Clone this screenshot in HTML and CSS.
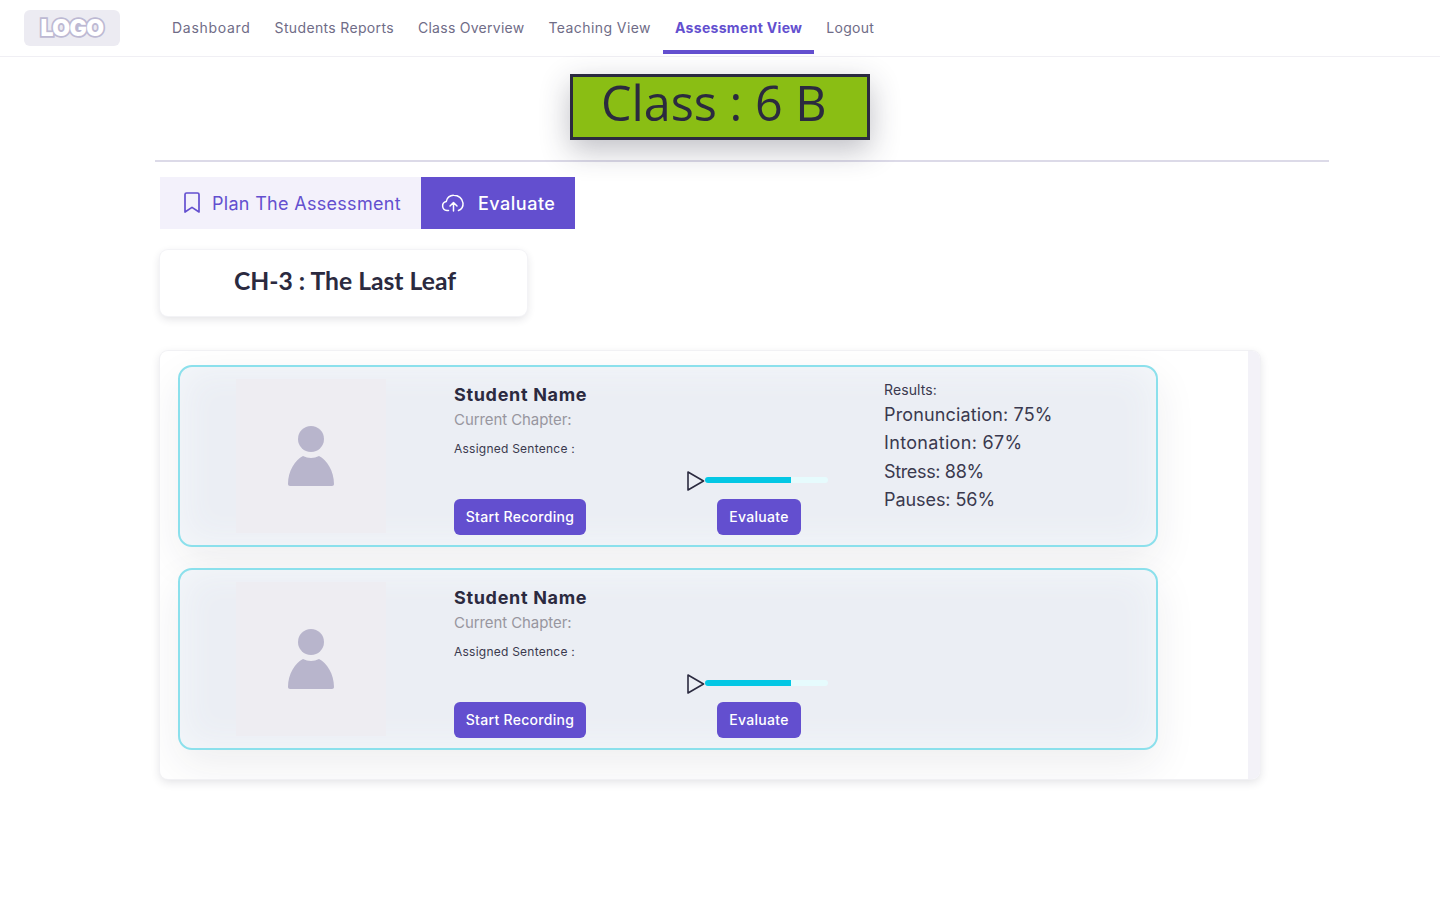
FILE: index.html
```html
<!DOCTYPE html>
<html lang="en">
<head>
<meta charset="UTF-8">
<meta name="viewport" content="width=device-width, initial-scale=1.0">
<title>Assessment View</title>
<link rel="stylesheet" href="styles.css">
</head>
<body>

<header class="navbar">
  <div class="logo"><span>LOGO</span></div>
  <nav class="nav-links">
    <a href="#">Dashboard</a>
    <a href="#">Students Reports</a>
    <a href="#">Class Overview</a>
    <a href="#">Teaching View</a>
    <a href="#" class="active">Assessment View</a>
    <a href="#">Logout</a>
  </nav>
</header>

<div class="class-row">
  <div class="class-box">Class : 6 B</div>
</div>
<hr class="divider">

<div class="tabs">
  <a href="#" class="tab">
    <svg width="18" height="22" viewBox="0 0 18 22" fill="none" stroke="currentColor" stroke-width="1.7" stroke-linejoin="round"><path d="M2 2.500C2 1.700 2.700 1 3.500 1h11c.8 0 1.500.7 1.500 1.500V20l-7-4.600L2 20z"/></svg>
    Plan The Assessment
  </a>
  <a href="#" class="tab tab-active">
    <svg width="24" height="18" viewBox="0 0 24 18" fill="none" stroke="currentColor" stroke-width="1.5" stroke-linecap="round" stroke-linejoin="round"><path d="M7.500 16.500H6A4.600 4.600 0 0 1 5.300 7.400 7.200 7.200 0 0 1 12.700 1.200c4.700 0 8.800 3.400 9.300 7.800.3 3.500-1.300 6.300-4.500 7.500"/><path d="M12.500 17V9M9 12l3.500-3.500L16 12"/></svg>
    Evaluate
  </a>
</div>

<div class="chapter-card">CH-3 : The Last Leaf</div>

<section class="panel">
  <div class="panel-list">

    <article class="student-card">
      <div class="photo">
        <svg width="46" height="60" viewBox="0 0 46 60" fill="#b8b5cc"><circle cx="23" cy="13" r="13"/><path d="M0 58C0 45 7 34 15 30c5 2.500 11 2.500 16 0 8 4 15 15 15 28 0 1.200-.8 2-2 2H2c-1.200 0-2-.8-2-2z"/></svg>
      </div>
      <div class="info">
        <h3 class="student-name">Student Name</h3>
        <p class="chapter-label">Current Chapter:</p>
        <p class="sentence-label">Assigned Sentence :</p>
        <div class="player">
          <svg width="18" height="20" viewBox="0 0 18 20" fill="none" stroke="#2b2a3f" stroke-width="1.600" stroke-linejoin="round"><path d="M1 1l15.500 9L1 19z"/></svg>
          <div class="track"><div class="track-fill"></div></div>
        </div>
        <div class="actions">
          <a href="#" class="btn">Start Recording</a>
          <a href="#" class="btn btn-evaluate">Evaluate</a>
        </div>
      </div>
      <div class="results">
        <p class="results-title">Results:</p>
        <p>Pronunciation: 75%</p>
        <p>Intonation: 67%</p>
        <p>Stress: 88%</p>
        <p>Pauses: 56%</p>
      </div>
    </article>

    <article class="student-card">
      <div class="photo">
        <svg width="46" height="60" viewBox="0 0 46 60" fill="#b8b5cc"><circle cx="23" cy="13" r="13"/><path d="M0 58C0 45 7 34 15 30c5 2.500 11 2.500 16 0 8 4 15 15 15 28 0 1.200-.8 2-2 2H2c-1.200 0-2-.8-2-2z"/></svg>
      </div>
      <div class="info">
        <h3 class="student-name">Student Name</h3>
        <p class="chapter-label">Current Chapter:</p>
        <p class="sentence-label">Assigned Sentence :</p>
        <div class="player">
          <svg width="18" height="20" viewBox="0 0 18 20" fill="none" stroke="#2b2a3f" stroke-width="1.600" stroke-linejoin="round"><path d="M1 1l15.500 9L1 19z"/></svg>
          <div class="track"><div class="track-fill"></div></div>
        </div>
        <div class="actions">
          <a href="#" class="btn">Start Recording</a>
          <a href="#" class="btn btn-evaluate">Evaluate</a>
        </div>
      </div>
    </article>

  </div>
  <div class="panel-scroll"></div>
</section>

</body>
</html>
```

FILE: styles.css
```css
* {
  box-sizing: border-box;
}

body {
  margin: 0;
  height: 900px;
  overflow: hidden;
  background-color: #fff;
  color: #2b2a3f;
  font-family: Inter, "Open Sans", sans-serif;
}

p, h3 {
  margin: 0;
}

a {
  text-decoration: none;
}

.navbar {
  display: flex;
  align-items: stretch;
  height: 57px;
  padding-left: 24px;
  border-bottom: 1px solid #f0eff4;
}

.logo {
  display: flex;
  align-items: center;
  justify-content: center;
  width: 96px;
  height: 36px;
  margin-top: 10px;
  background-color: #ecebf2;
  border-radius: 6px;
}

.logo span {
  color: #fff;
  font-size: 23px;
  font-weight: 900;
  letter-spacing: -0.6px;
  -webkit-text-stroke: 3.5px #bdb9d3;
  paint-order: stroke fill;
}

.nav-links {
  display: flex;
  margin-left: 40px;
  height: 54px;
}

.nav-links a {
  display: flex;
  align-items: center;
  padding: 5px 12px 0;
  border-bottom: 4px solid transparent;
  color: #6f6c87;
  font-size: 14px;
  letter-spacing: 0.27px;
  white-space: nowrap;
}

/* Inter runs narrower than the nav font on some words */
.nav-links a:nth-child(1) {
  letter-spacing: 0.71px;
}

.nav-links a:nth-child(2) {
  letter-spacing: 0.34px;
}

.nav-links a:nth-child(4) {
  letter-spacing: 0.42px;
}

.nav-links a.active {
  color: #634fcf;
  font-weight: 700;
  letter-spacing: 0.32px;
  border-bottom-color: #634fcf;
}

.class-row {
  display: flex;
  justify-content: center;
  padding-top: 17px;
}

.class-box {
  width: 300px;
  height: 66px;
  padding-left: 28px;
  background-color: #8abe14;
  border: 3px solid #2b2a3f;
  box-shadow: 0 10px 30px rgba(43, 42, 63, 0.3);
  font-family: "Open Sans", sans-serif;
  font-size: 48.500px;
  line-height: 50px;
  white-space: nowrap;
}

.divider {
  width: 1174px;
  height: 2px;
  margin: 20px 0 0 155px;
  border: 0;
  background-color: #dcdae8;
}

.tabs {
  display: flex;
  margin: 15px 0 0 160px;
}

.tab {
  display: flex;
  align-items: center;
  height: 52px;
  background-color: #f3f1fb;
  color: #634fcf;
  font-size: 18px;
  letter-spacing: 0.3px;
  white-space: nowrap;
}

.tab:first-child {
  width: 261px;
  padding-left: 23px;
  gap: 11px;
}

.tab-active {
  width: 154px;
  padding-left: 20px;
  gap: 13px;
  background-color: #634fcf;
  color: #fff;
  font-weight: 500;
  letter-spacing: 0.5px;
}

.chapter-card {
  width: 367px;
  height: 66px;
  margin: 21px 0 0 160px;
  padding-left: 3px;
  background-color: #fff;
  border-radius: 8px;
  box-shadow: 0 0 0 1px #f3f3f6, 0 3px 8px rgba(43, 42, 63, 0.14);
  font-family: Lato, sans-serif;
  font-size: 24.700px;
  font-weight: 700;
  line-height: 62px;
  text-align: center;
}

.panel {
  display: flex;
  width: 1100px;
  height: 428px;
  margin: 35px 0 0 160px;
  background-color: #fff;
  border-radius: 8px;
  box-shadow: 0 0 0 1px #f1f1f4, 0 3px 10px rgba(43, 42, 63, 0.14);
  overflow: hidden;
}

.panel-list {
  flex: 1;
  display: flex;
  flex-direction: column;
  gap: 21px;
  padding: 14px 0 0 18px;
}

.panel-scroll {
  width: 12px;
  background-color: #f3f2f8;
}

.student-card {
  display: flex;
  width: 980px;
  height: 182px;
  padding: 12px 0 0 56px;
  background-color: #ebeef4;
  border: 2px solid #8be0ec;
  border-radius: 14px;
  box-shadow: 0 15px 40px rgba(43, 42, 63, 0.08), inset 0 0 36px #f5f8fb;
}

.photo {
  display: flex;
  align-items: center;
  justify-content: center;
  flex-shrink: 0;
  width: 150px;
  height: 154px;
  background-color: #eeedf2;
}

.info {
  flex-shrink: 0;
  width: 430px;
  margin-left: 68px;
}

.student-name {
  margin-top: 4px;
  font-size: 18px;
  font-weight: 700;
  line-height: 24px;
  letter-spacing: 0.68px;
}

.chapter-label {
  margin-top: 2px;
  color: #98969f;
  font-size: 15px;
  line-height: 22px;
  letter-spacing: -0.08px;
}

.sentence-label {
  margin-top: 9px;
  color: #3a394e;
  font-size: 12px;
  line-height: 18px;
  letter-spacing: 0.24px;
}

.player {
  display: flex;
  align-items: center;
  margin: 13px 0 0 233px;
  height: 20px;
}

.track {
  width: 123px;
  height: 6px;
  margin-top: -2px;
  background-color: #e6fbfd;
  border-radius: 3px;
  overflow: hidden;
}

.track-fill {
  width: 70%;
  height: 100%;
  background-color: #03c7e4;
}

.actions {
  display: flex;
  margin-top: 8px;
}

.btn {
  display: flex;
  align-items: center;
  justify-content: center;
  width: 132px;
  height: 36px;
  padding-bottom: 2px;
  background-color: #634fcf;
  border-radius: 6px;
  color: #fff;
  font-size: 14px;
  font-weight: 500;
  letter-spacing: 0.3px;
  white-space: nowrap;
}

.btn-evaluate {
  width: 84px;
  margin-left: 131px;
}

.results {
  color: #3a394e;
  font-size: 18px;
  line-height: 28.400px;
  letter-spacing: 0.15px;
  white-space: nowrap;
}

.results p:nth-child(3) {
  letter-spacing: 0.33px;
}

.results p:nth-child(4) {
  letter-spacing: -0.35px;
}

.results p:nth-child(5) {
  letter-spacing: -0.07px;
}

.results .results-title {
  margin-top: 1px;
  margin-bottom: 1px;
  font-size: 14px;
  line-height: 20px;
  letter-spacing: 0.1px;
}
```
